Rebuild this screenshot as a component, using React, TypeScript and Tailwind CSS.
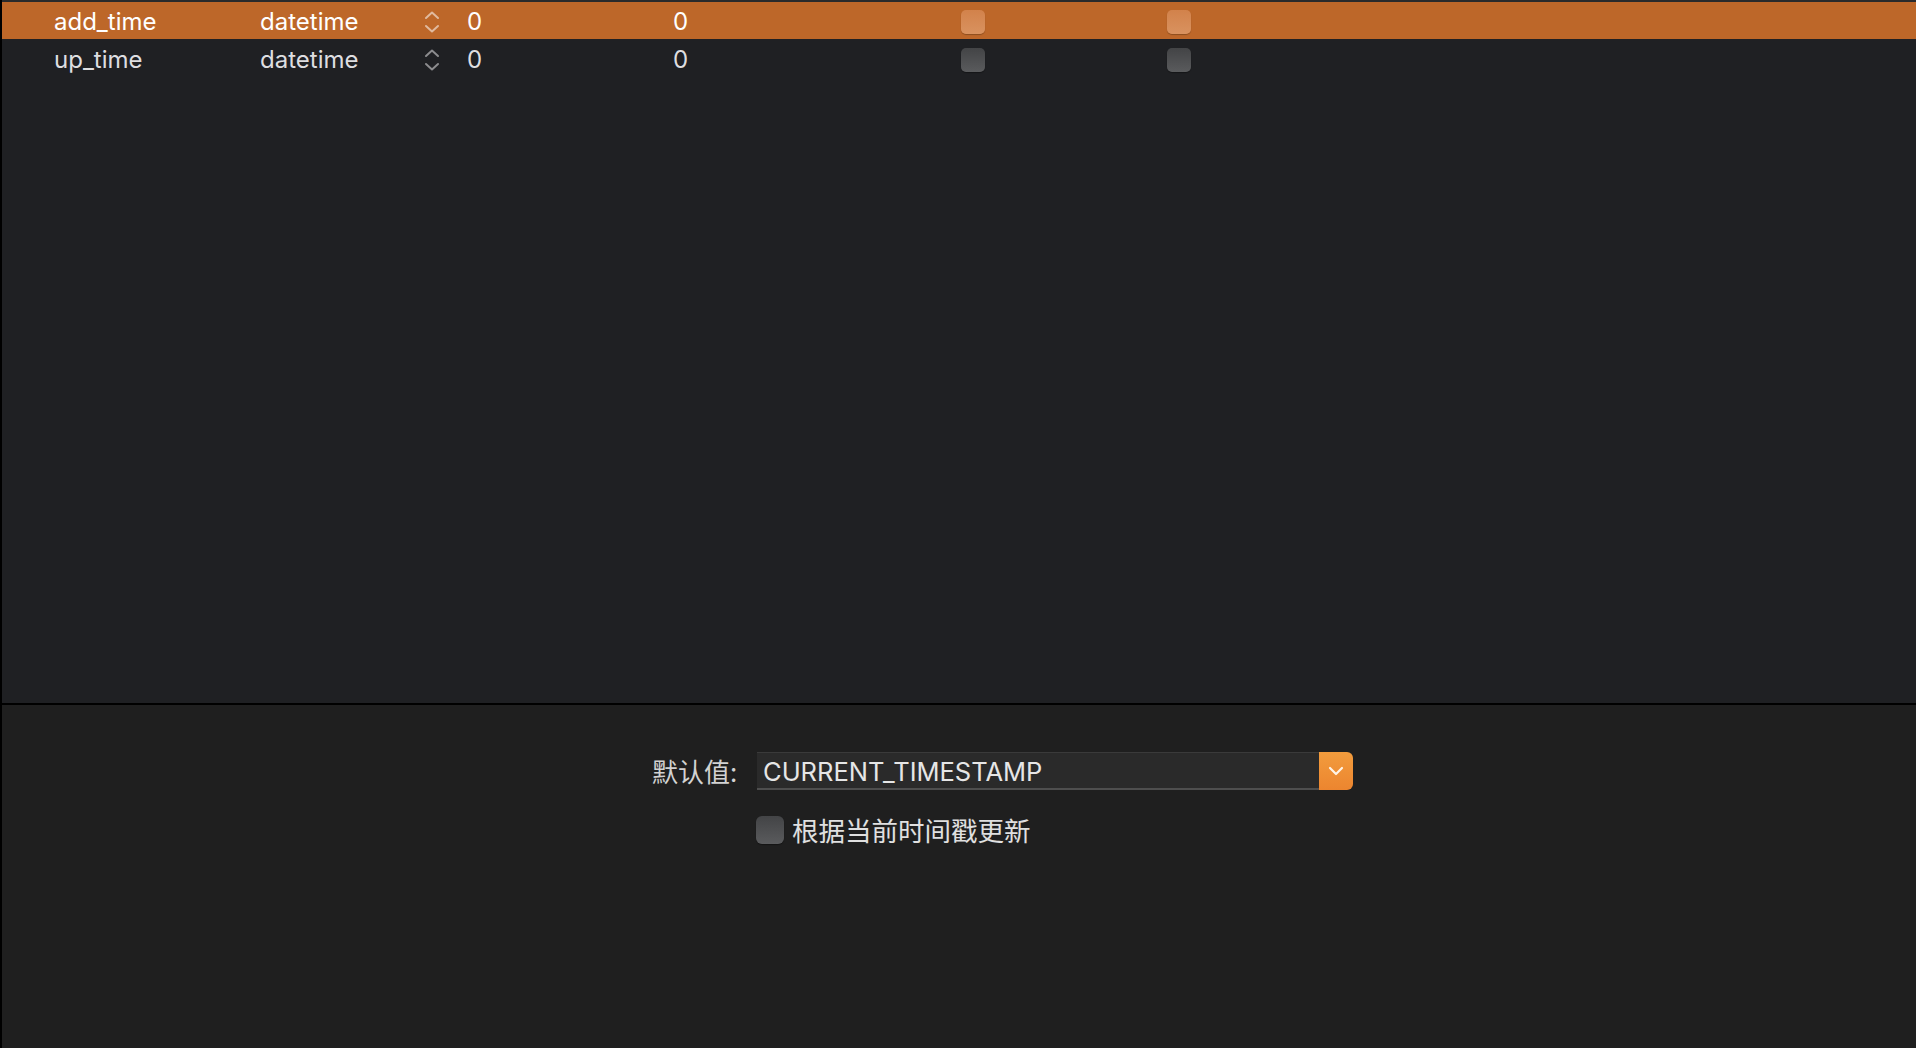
import { ReactNode } from 'react'

interface Field {
  name: string
  type: string
  length: string
  decimals: string
  selected?: boolean
}

const fields: Field[] = [
  { name: 'add_time', type: 'datetime', length: '0', decimals: '0', selected: true },
  { name: 'up_time', type: 'datetime', length: '0', decimals: '0' },
]

function Stepper({ light }: { light?: boolean }) {
  const color = light ? 'rgba(255,255,255,0.55)' : '#8c8c8e'
  return (
    <svg width="16" height="24" viewBox="0 0 16 24" fill="none">
      <path d="M2 8 L8 2.5 L14 8" stroke={color} strokeWidth="2" strokeLinecap="round" strokeLinejoin="round" />
      <path d="M2 16 L8 21.5 L14 16" stroke={color} strokeWidth="2" strokeLinecap="round" strokeLinejoin="round" />
    </svg>
  )
}

function Check({ light, size = 'sm' }: { light?: boolean; size?: 'sm' | 'lg' }) {
  const dim = size === 'lg' ? 'w-[28px] h-[28px] rounded-[6px]' : 'w-[24px] h-[24px] rounded-[5px]'
  const tone = light
    ? 'bg-gradient-to-b from-[#d2824b] to-[#d9925f] shadow-[0_1px_1px_rgba(0,0,0,0.25)]'
    : 'bg-gradient-to-b from-[#434446] to-[#5a5b5d] shadow-[0_1px_1px_rgba(0,0,0,0.35)]'
  return <div className={`${dim} ${tone} shrink-0`} />
}

function Cell({ w, children }: { w: string; children: ReactNode }) {
  return <div className={`${w} shrink-0 flex items-center`}>{children}</div>
}

function Row({ f }: { f: Field }) {
  const bg = f.selected ? 'bg-[#bd6729] text-white' : 'text-[#dedee0]'
  return (
    <div className={`h-[37px] flex items-center pl-[52px] pt-[2px] ${bg}`}>
      <Cell w="w-[206px]">{f.name}</Cell>
      <Cell w="w-[164px]">{f.type}</Cell>
      <Cell w="w-[43px]"><Stepper light={f.selected} /></Cell>
      <Cell w="w-[206px]">{f.length}</Cell>
      <Cell w="w-[288px]">{f.decimals}</Cell>
      <Cell w="w-[206px]"><Check light={f.selected} /></Cell>
      <Cell w="w-[206px]"><Check light={f.selected} /></Cell>
    </div>
  )
}

export default function App() {
  return (
    <div className="w-[1916px] h-[1048px] bg-black pl-[2px] flex flex-col overflow-hidden font-['Inter','Noto_Sans_CJK_SC',sans-serif]">
      {/* field table */}
      <div className="h-[703px] bg-[#1f2023] flex flex-col gap-[1px] border-t-2 border-[#2a2a2b] text-[24px]">
        {fields.map((f) => (
          <Row key={f.name} f={f} />
        ))}
      </div>

      <div className="h-[2px] bg-black" />

      {/* default value editor */}
      <div className="flex-1 bg-[#1f1f1f] pt-[46px] pl-[650px] flex flex-col gap-[20px]">
        <div className="flex items-center">
          <span className="w-[88px] text-[26px] text-[#d2d2d2] font-['Noto_Sans_CJK_SC',sans-serif]">默认值:</span>
          <div className="w-[562px] h-[38px] ml-[17px] bg-[#2a2a2a] border-t border-[#3a3a3a] border-b-2 border-b-[#4e4e4e] flex items-center pl-[6px] pt-[5px] text-[25.5px] text-[#e6e6e6] font-['Inter',sans-serif]">
            CURRENT_TIMESTAMP
          </div>
          <div className="w-[34px] h-[38px] rounded-r-[6px] bg-gradient-to-b from-[#f29c3d] to-[#ec852f] flex items-center justify-center">
            <svg width="16" height="10" viewBox="0 0 16 10" fill="none">
              <path d="M2 2 L8 8 L14 2" stroke="#fff4e6" strokeWidth="2.2" strokeLinecap="round" strokeLinejoin="round" />
            </svg>
          </div>
        </div>
        <div className="flex items-center gap-[8px] pl-[104px]">
          <Check size="lg" />
          <span className="text-[26.5px] text-[#e0e0e0] font-['Noto_Sans_CJK_SC',sans-serif]">根据当前时间戳更新</span>
        </div>
      </div>
    </div>
  )
}
